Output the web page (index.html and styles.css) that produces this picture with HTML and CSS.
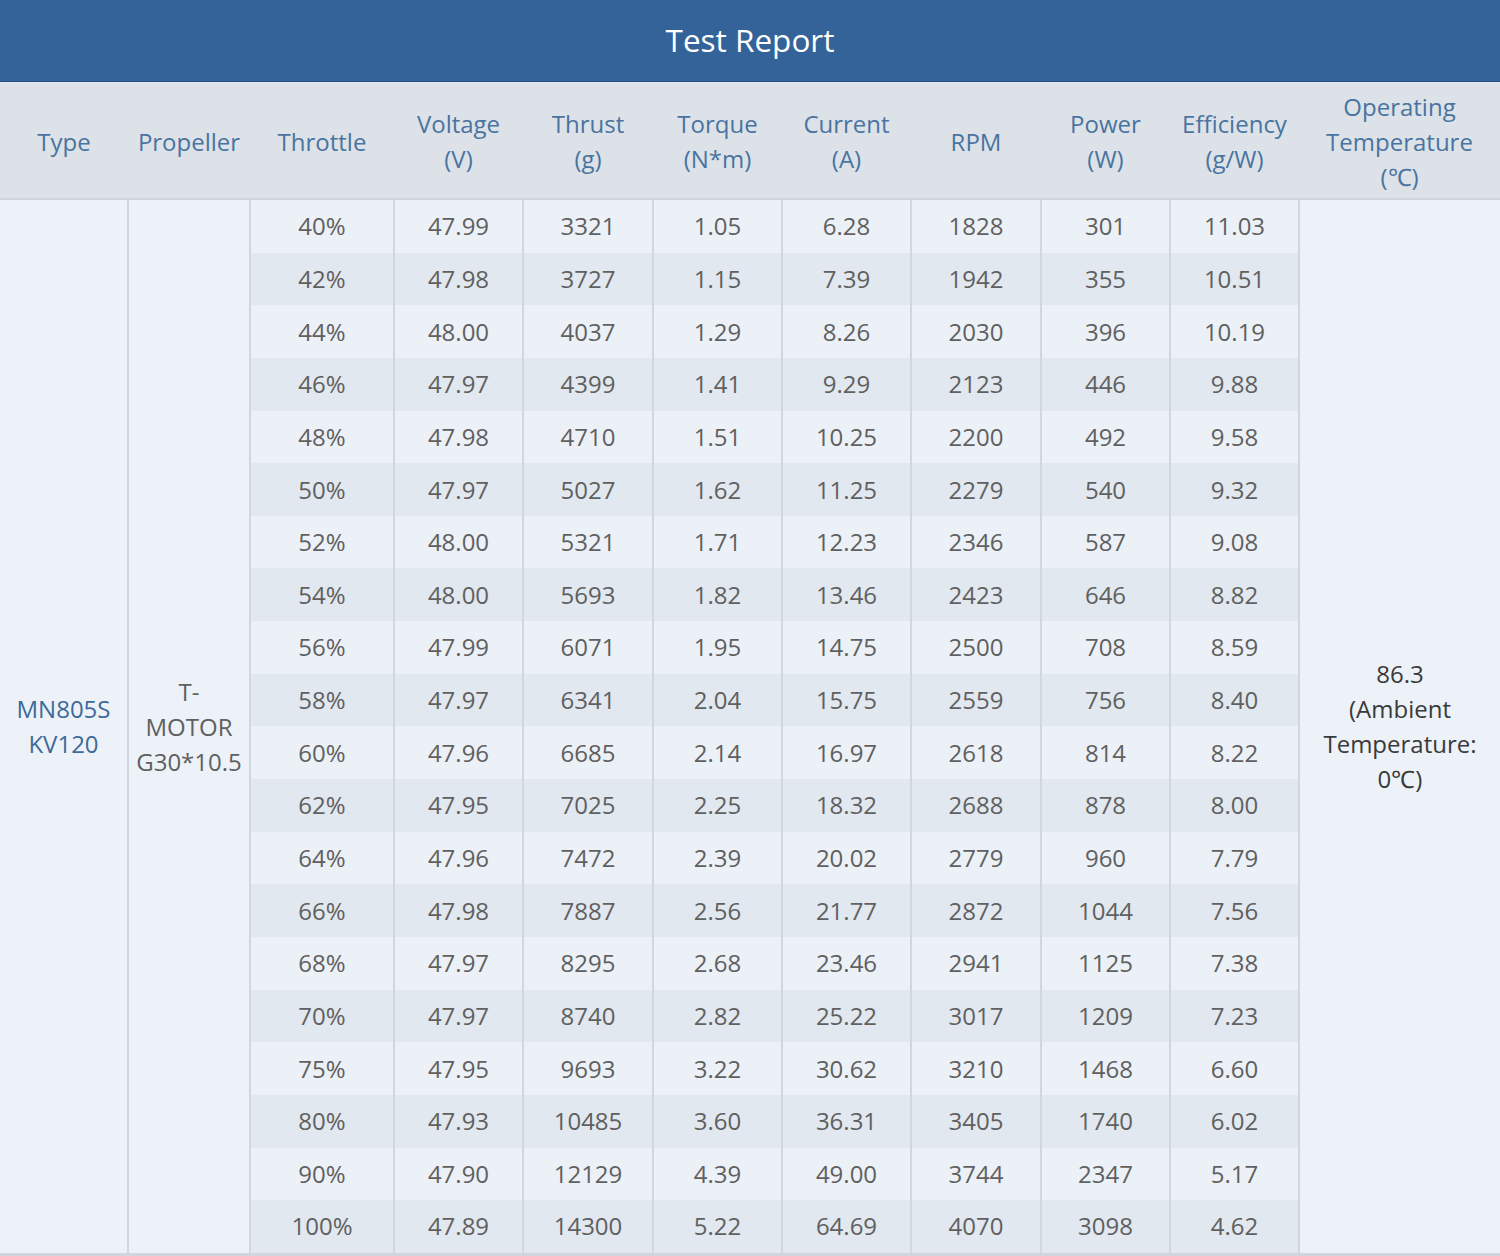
FILE: index.html
```html
<!DOCTYPE html>
<html lang="en">
<head>
<meta charset="utf-8">
<title>Test Report</title>
<link rel="stylesheet" href="styles.css">
</head>
<body>
<div class="report">
  <div class="title">Test Report</div>
  <table class="grid">
    <colgroup>
      <col class="c-type"><col class="c-prop"><col class="c-thr"><col class="c-std"><col class="c-std2"><col class="c-std"><col class="c-std"><col class="c-std2"><col class="c-std"><col class="c-std"><col class="c-temp">
    </colgroup>
    <thead>
      <tr>
        <th>Type</th><th>Propeller</th><th>Throttle</th><th>Voltage<br>(V)</th><th>Thrust<br>(g)</th><th>Torque<br>(N*m)</th><th>Current<br>(A)</th><th>RPM</th><th>Power<br>(W)</th><th>Efficiency<br>(g/W)</th><th>Operating<br>Temperature<br>(℃)</th>
      </tr>
    </thead>
    <tbody>
      <tr><td class="type" rowspan="20">MN805S<br>KV120</td><td class="prop" rowspan="20">T-<br>MOTOR<br>G30*10.5</td><td>40%</td><td>47.99</td><td>3321</td><td>1.05</td><td>6.28</td><td>1828</td><td>301</td><td>11.03</td><td class="temp" rowspan="20">86.3<br>(Ambient<br>Temperature:<br>0℃)</td></tr>
      <tr><td>42%</td><td>47.98</td><td>3727</td><td>1.15</td><td>7.39</td><td>1942</td><td>355</td><td>10.51</td></tr>
      <tr><td>44%</td><td>48.00</td><td>4037</td><td>1.29</td><td>8.26</td><td>2030</td><td>396</td><td>10.19</td></tr>
      <tr><td>46%</td><td>47.97</td><td>4399</td><td>1.41</td><td>9.29</td><td>2123</td><td>446</td><td>9.88</td></tr>
      <tr><td>48%</td><td>47.98</td><td>4710</td><td>1.51</td><td>10.25</td><td>2200</td><td>492</td><td>9.58</td></tr>
      <tr><td>50%</td><td>47.97</td><td>5027</td><td>1.62</td><td>11.25</td><td>2279</td><td>540</td><td>9.32</td></tr>
      <tr><td>52%</td><td>48.00</td><td>5321</td><td>1.71</td><td>12.23</td><td>2346</td><td>587</td><td>9.08</td></tr>
      <tr><td>54%</td><td>48.00</td><td>5693</td><td>1.82</td><td>13.46</td><td>2423</td><td>646</td><td>8.82</td></tr>
      <tr><td>56%</td><td>47.99</td><td>6071</td><td>1.95</td><td>14.75</td><td>2500</td><td>708</td><td>8.59</td></tr>
      <tr><td>58%</td><td>47.97</td><td>6341</td><td>2.04</td><td>15.75</td><td>2559</td><td>756</td><td>8.40</td></tr>
      <tr><td>60%</td><td>47.96</td><td>6685</td><td>2.14</td><td>16.97</td><td>2618</td><td>814</td><td>8.22</td></tr>
      <tr><td>62%</td><td>47.95</td><td>7025</td><td>2.25</td><td>18.32</td><td>2688</td><td>878</td><td>8.00</td></tr>
      <tr><td>64%</td><td>47.96</td><td>7472</td><td>2.39</td><td>20.02</td><td>2779</td><td>960</td><td>7.79</td></tr>
      <tr><td>66%</td><td>47.98</td><td>7887</td><td>2.56</td><td>21.77</td><td>2872</td><td>1044</td><td>7.56</td></tr>
      <tr><td>68%</td><td>47.97</td><td>8295</td><td>2.68</td><td>23.46</td><td>2941</td><td>1125</td><td>7.38</td></tr>
      <tr><td>70%</td><td>47.97</td><td>8740</td><td>2.82</td><td>25.22</td><td>3017</td><td>1209</td><td>7.23</td></tr>
      <tr><td>75%</td><td>47.95</td><td>9693</td><td>3.22</td><td>30.62</td><td>3210</td><td>1468</td><td>6.60</td></tr>
      <tr><td>80%</td><td>47.93</td><td>10485</td><td>3.60</td><td>36.31</td><td>3405</td><td>1740</td><td>6.02</td></tr>
      <tr><td>90%</td><td>47.90</td><td>12129</td><td>4.39</td><td>49.00</td><td>3744</td><td>2347</td><td>5.17</td></tr>
      <tr><td>100%</td><td>47.89</td><td>14300</td><td>5.22</td><td>64.69</td><td>4070</td><td>3098</td><td>4.62</td></tr>
    </tbody>
  </table>
</div>
</body>
</html>
```

FILE: styles.css
```css
html, body {
  margin: 0;
  padding: 0;
  background: #ecf1f7;
}

.report {
  width: 1500px;
  font-family: "Open Sans", "Liberation Sans", sans-serif;
}

.title {
  height: 81px;
  background: #336399;
  border-bottom: 1px solid #284f7c;
  color: #ffffff;
  font-size: 31.5px;
  line-height: 80px;
  text-align: center;
}

.grid {
  width: 1500px;
  border-collapse: collapse;
  table-layout: fixed;
  border-bottom: 3px solid #d0d6dc;
}

.c-type { width: 128px; }
.c-prop { width: 122px; }
.c-thr { width: 144px; }
.c-std { width: 129px; }
.c-std2 { width: 130px; }
.c-temp { width: 201px; }

.grid thead th {
  height: 114px;
  padding: 0;
  background: #dce2e8;
  border-top: 2px solid #dce7f2;
  border-bottom: 2px solid #cdd4db;
  color: #4a74a0;
  font-weight: normal;
  font-size: 24px;
  line-height: 35px;
  text-align: center;
  vertical-align: middle;
}

.grid tbody td {
  height: 52.65px;
  padding: 0;
  border-left: 2px solid #d0d7df;
  border-right: 2px solid #d0d7df;
  color: #606060;
  font-size: 24px;
  line-height: 34px;
  text-align: center;
  vertical-align: middle;
  background: #ecf1f7;
}

.grid tbody tr:nth-child(even) td {
  background: #e2e8ef;
}

.grid tbody td.type,
.grid tbody td.prop,
.grid tbody td.temp {
  background: #ecf2f8;
  line-height: 35px;
}

.grid tbody td.type {
  border-left: none;
  color: #3d6a98;
}

.grid tbody td.prop {
  color: #606060;
}

.grid tbody td.temp {
  border-right: none;
  color: #3a3a3a;
}
```
